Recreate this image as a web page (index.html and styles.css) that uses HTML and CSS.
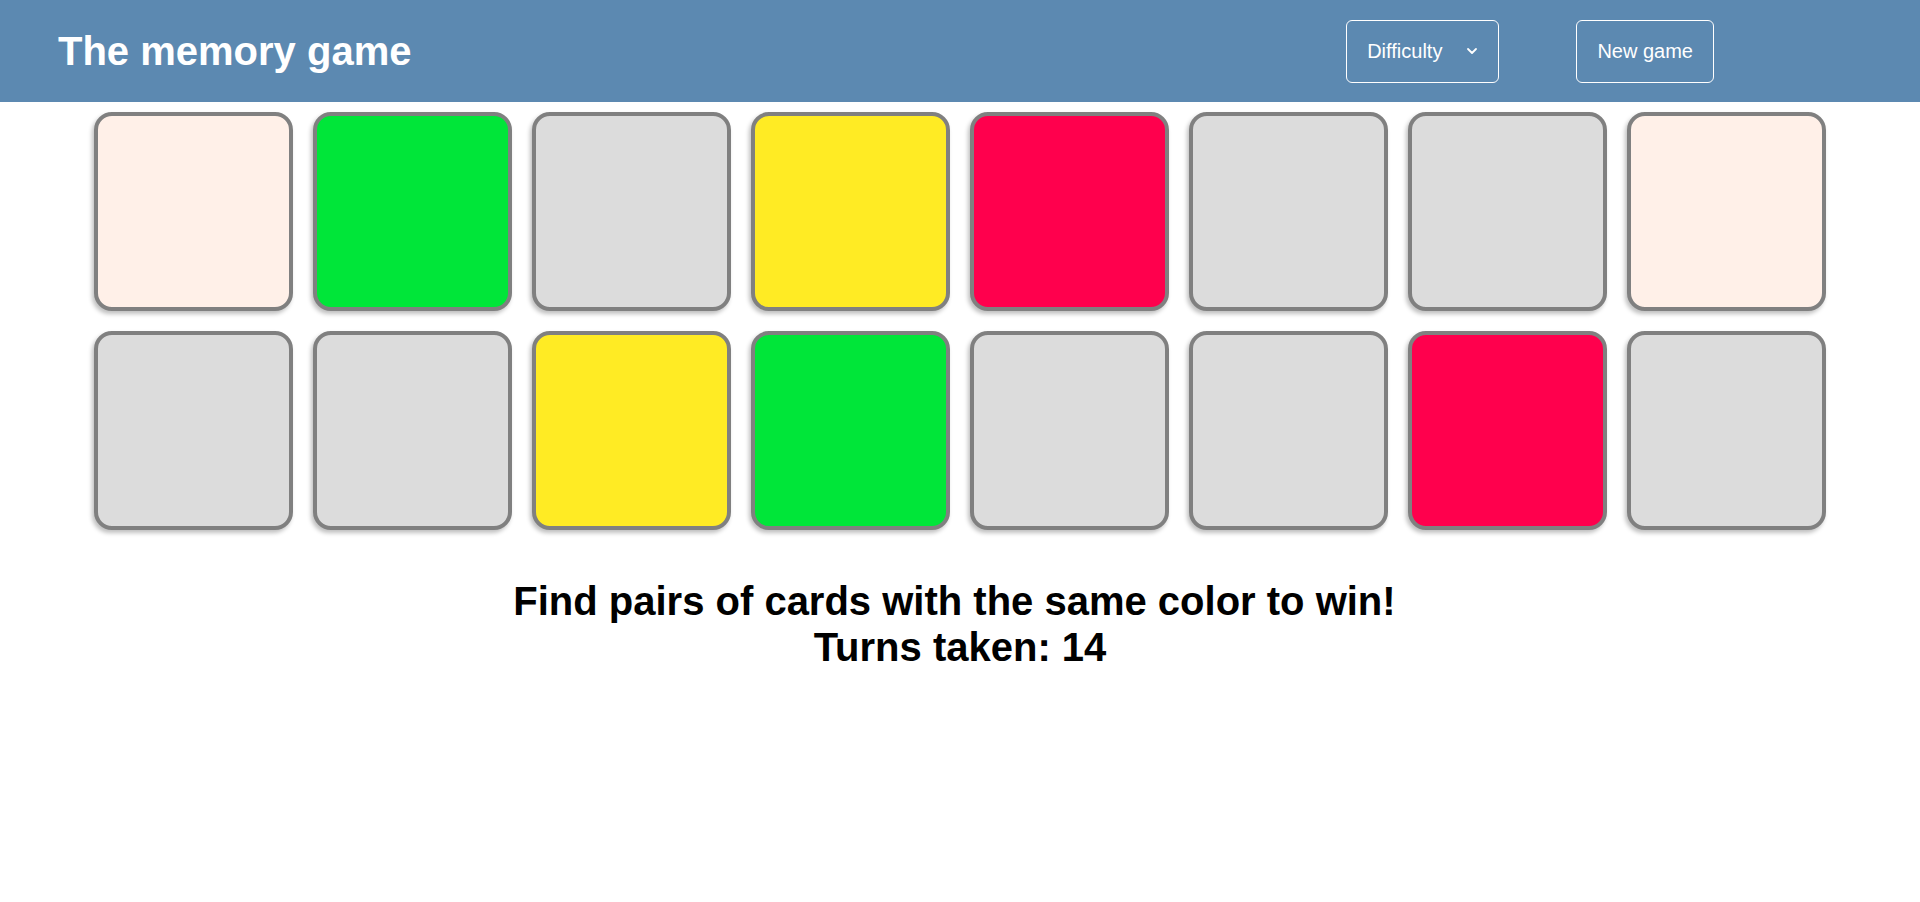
FILE: index.html
```html
<!DOCTYPE html>
<html lang="en">
<head>
<meta charset="utf-8">
<title>The memory game</title>
<link rel="stylesheet" href="styles.css">
</head>
<body>
<header class="topbar">
  <h1 class="title">The memory game</h1>
  <div class="controls">
    <button class="btn select-btn" type="button">
      <span>Difficulty</span>
      <svg class="chevron" width="12" height="8" viewBox="0 0 12 8" aria-hidden="true"><path d="M2 2 L6 6 L10 2" fill="none" stroke="#fff" stroke-width="1.8" stroke-linecap="round" stroke-linejoin="round"/></svg>
    </button>
    <button class="btn new-btn" type="button">New game</button>
  </div>
</header>
<main>
  <section class="board">
    <div class="card peach"></div>
    <div class="card green"></div>
    <div class="card hidden"></div>
    <div class="card yellow"></div>
    <div class="card red"></div>
    <div class="card hidden"></div>
    <div class="card hidden"></div>
    <div class="card peach"></div>
    <div class="card hidden"></div>
    <div class="card hidden"></div>
    <div class="card yellow"></div>
    <div class="card green"></div>
    <div class="card hidden"></div>
    <div class="card hidden"></div>
    <div class="card red"></div>
    <div class="card hidden"></div>
  </section>
  <h2 class="message">Find pairs of cards with the same color to win!&nbsp;<br>Turns taken: 14</h2>
</main>
</body>
</html>
```

FILE: styles.css
```css
* { box-sizing: border-box; }
body {
  margin: 0;
  font-family: "Liberation Sans", Arial, sans-serif;
  background: #fff;
  color: #000;
}
.topbar {
  height: 102px;
  background: #5c89b1;
  display: flex;
  align-items: center;
  padding: 0 206px 0 58px;
}
.title {
  flex: 1;
  margin: 0;
  color: #fff;
  font-size: 40px;
  font-weight: bold;
  line-height: 46px;
}
.controls {
  display: flex;
  align-items: center;
  gap: 77px;
}
.btn {
  height: 63px;
  padding: 0 22px;
  background: transparent;
  border: 1px solid #fff;
  border-radius: 6px;
  color: #fff;
  font-family: "Liberation Sans", Arial, sans-serif;
  font-size: 20px;
  display: flex;
  align-items: center;
}
.new-btn {
  padding: 0 20px;
}
.select-btn {
  padding: 0 20px;
  gap: 24px;
}
.chevron { display: block; }
.board {
  display: grid;
  grid-template-columns: repeat(8, 199px);
  gap: 20px;
  justify-content: center;
  padding-top: 10px;
}
.card {
  width: 199px;
  height: 199px;
  border: 4px solid #808080;
  border-radius: 18px;
  box-shadow: -2px 3px 4px rgba(0, 0, 0, 0.25);
}
.peach { background: #fff0e8; }
.green { background: #00e639; }
.yellow { background: #ffeb24; }
.red { background: #ff004d; }
.hidden { background: #dcdcdc; }
.message {
  margin: 48px 0 0;
  text-align: center;
  font-size: 40px;
  font-weight: bold;
  line-height: 46px;
}
```
